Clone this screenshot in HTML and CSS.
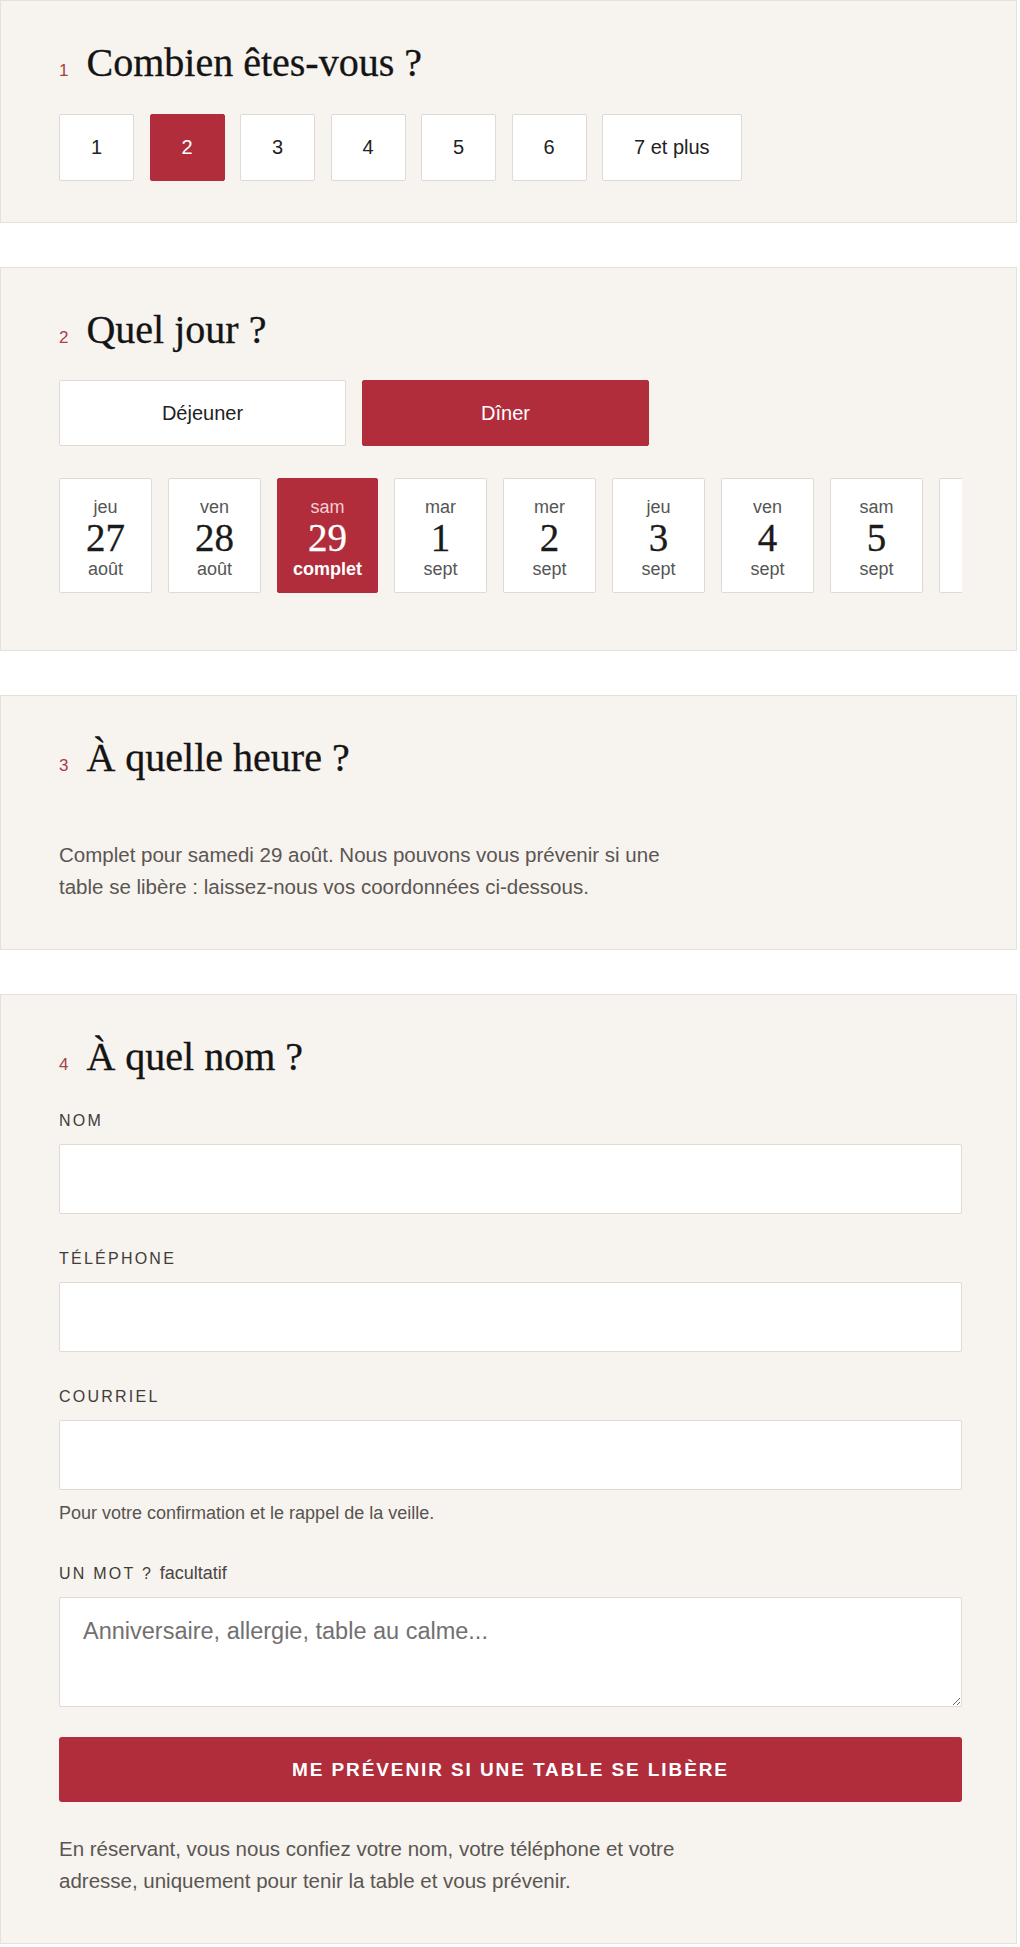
FILE: index.html
```html
<!DOCTYPE html>
<html lang="fr">

<head>
  <meta charset="UTF-8">
  <meta name="viewport" content="width=device-width, initial-scale=1.0">
  <title>Réserver une table</title>
  <link rel="stylesheet" href="styles.css">
</head>

<body>
  <div class="booking">

    <section class="step">
      <h2 class="step-title"><span class="step-num">1</span>Combien êtes-vous&nbsp;?</h2>
      <div class="opts">
        <button class="opt">1</button>
        <button class="opt on">2</button>
        <button class="opt">3</button>
        <button class="opt">4</button>
        <button class="opt">5</button>
        <button class="opt">6</button>
        <button class="opt wide">7 et plus</button>
      </div>
    </section>

    <section class="step">
      <h2 class="step-title"><span class="step-num">2</span>Quel jour&nbsp;?</h2>
      <div class="meals">
        <button class="meal">Déjeuner</button>
        <button class="meal on">Dîner</button>
      </div>
      <div class="days">
        <button class="day"><span class="day-name">jeu</span><span class="day-num">27</span><span class="day-month">août</span></button>
        <button class="day"><span class="day-name">ven</span><span class="day-num">28</span><span class="day-month">août</span></button>
        <button class="day on"><span class="day-name">sam</span><span class="day-num">29</span><span class="day-month">complet</span></button>
        <button class="day"><span class="day-name">mar</span><span class="day-num">1</span><span class="day-month">sept</span></button>
        <button class="day"><span class="day-name">mer</span><span class="day-num">2</span><span class="day-month">sept</span></button>
        <button class="day"><span class="day-name">jeu</span><span class="day-num">3</span><span class="day-month">sept</span></button>
        <button class="day"><span class="day-name">ven</span><span class="day-num">4</span><span class="day-month">sept</span></button>
        <button class="day"><span class="day-name">sam</span><span class="day-num">5</span><span class="day-month">sept</span></button>
        <button class="day"><span class="day-name">mar</span><span class="day-num">8</span><span class="day-month">sept</span></button>
      </div>
    </section>

    <section class="step">
      <h2 class="step-title"><span class="step-num">3</span>À quelle heure&nbsp;?</h2>
      <p class="note full">Complet pour samedi 29 août. Nous pouvons vous prévenir si une table se libère&nbsp;: laissez-nous vos coordonnées ci-dessous.</p>
    </section>

    <section class="step">
      <h2 class="step-title"><span class="step-num">4</span>À quel nom&nbsp;?</h2>
      <form class="fields" onsubmit="return false">
        <label class="field">
          <span class="field-label">Nom</span>
          <input class="input" type="text">
        </label>
        <label class="field">
          <span class="field-label">Téléphone</span>
          <input class="input" type="tel">
        </label>
        <label class="field">
          <span class="field-label">Courriel</span>
          <input class="input" type="email">
          <span class="hint">Pour votre confirmation et le rappel de la veille.</span>
        </label>
        <label class="field">
          <span class="field-label">Un mot ? <small>facultatif</small></span>
          <textarea class="input area" placeholder="Anniversaire, allergie, table au calme..."></textarea>
        </label>
        <button class="submit" type="submit">Me prévenir si une table se libère</button>
      </form>
      <p class="note legal">En réservant, vous nous confiez votre nom, votre téléphone et votre adresse, uniquement pour tenir la table et vous prévenir.</p>
    </section>

  </div>
</body>

</html>
```

FILE: styles.css
```css
:root {
  --red: #b12d3b;
  --bg: #f7f3ef;
  --line: #dfdad5;
}

* {
  margin: 0;
  padding: 0;
  box-sizing: border-box;
}

body {
  font-family: "Liberation Sans", Arial, sans-serif;
  color: #222;
  background: #fff;
}

.booking {
  width: 1017px;
  display: flex;
  flex-direction: column;
  gap: 44px;
}

.step {
  background: var(--bg);
  border: 1px solid #e4e0db;
  padding: 39px 54px 41px 58px;
}

.step-title {
  display: flex;
  align-items: baseline;
  gap: 18px;
  font-family: "Liberation Serif", "Times New Roman", serif;
  font-weight: 400;
  font-size: 40px;
  line-height: 46px;
  color: #141414;
  -webkit-text-stroke: 0.3px #141414;
}

.step-num {
  font-family: "Liberation Sans", Arial, sans-serif;
  font-size: 17px;
  line-height: 1;
  color: #a63f4a;
  -webkit-text-stroke: 0;
}

button {
  font-family: inherit;
  cursor: pointer;
}

/* step 1 */
.opts {
  display: flex;
  gap: 15.5px;
  margin-top: 28px;
}

.opt {
  min-width: 75px;
  height: 67px;
  padding: 0 20px;
  background: #fff;
  border: 1px solid var(--line);
  border-radius: 2px;
  font-size: 20px;
  color: #222;
}

.opt.wide {
  padding: 0 31px;
}

.opt.on,
.meal.on,
.day.on {
  background: var(--red);
  border-color: var(--red);
  color: #fff;
}

/* step 2 */
.meals {
  display: grid;
  grid-template-columns: 287px 287px;
  gap: 16px;
  margin-top: 27px;
}

.meal {
  height: 66px;
  background: #fff;
  border: 1px solid var(--line);
  border-radius: 2px;
  font-size: 20px;
  color: #222;
}

.days {
  display: flex;
  gap: 16px;
  margin-top: 32px;
  padding-bottom: 16px;
  overflow-x: auto;
  scrollbar-width: none;
}

.days::-webkit-scrollbar {
  display: none;
}

.day {
  flex: none;
  min-width: 93px;
  height: 115px;
  padding: 18px 15px 0;
  display: flex;
  flex-direction: column;
  align-items: center;
  background: #fff;
  border: 1px solid var(--line);
  border-radius: 2px;
}

.day-name,
.day-month {
  font-size: 18px;
  line-height: 20px;
  color: #555;
}

.day-num {
  font-family: "Liberation Serif", "Times New Roman", serif;
  font-size: 39px;
  line-height: 42px;
  color: #1b1b1b;
  -webkit-text-stroke: 0.3px #1b1b1b;
}

.day.on .day-name {
  color: #f3cfd3;
}

.day.on .day-num {
  color: #fff;
  -webkit-text-stroke-color: #fff;
}

.day.on .day-month {
  color: #fff;
  font-weight: bold;
}

/* step 3 */
.note {
  max-width: 632px;
  font-size: 20.5px;
  line-height: 32px;
  color: #5a5652;
  margin-bottom: 5px;
}

.note.full {
  margin-top: 58px;
}

/* step 4 */
.fields {
  display: flex;
  flex-direction: column;
  gap: 35px;
  margin-top: 31px;
}

.field {
  display: flex;
  flex-direction: column;
  gap: 13px;
}

.field-label {
  font-size: 16px;
  line-height: 20px;
  letter-spacing: 0.14em;
  text-transform: uppercase;
  color: #403c39;
}

.field-label small {
  font-size: 18px;
  letter-spacing: 0;
  text-transform: none;
  color: #4a4643;
}

.input {
  width: 100%;
  height: 70px;
  padding: 0 20px;
  background: #fff;
  border: 1px solid var(--line);
  border-radius: 2px;
  font-family: inherit;
  font-size: 20px;
  outline: none;
}

.area {
  height: 110px;
  padding: 20px 23px;
  font-size: 23.5px;
  resize: vertical;
}

.area::placeholder {
  color: #727070;
}

.hint {
  margin-top: -2px;
  margin-bottom: 3px;
  font-size: 18px;
  line-height: 24px;
  color: #57534f;
}

.submit {
  margin-top: -5px;
  height: 65px;
  background: var(--red);
  border: none;
  border-radius: 3px;
  color: #fff;
  font-size: 19px;
  font-weight: bold;
  letter-spacing: 0.1em;
  text-transform: uppercase;
}

.note.legal {
  margin-top: 31px;
}
```
